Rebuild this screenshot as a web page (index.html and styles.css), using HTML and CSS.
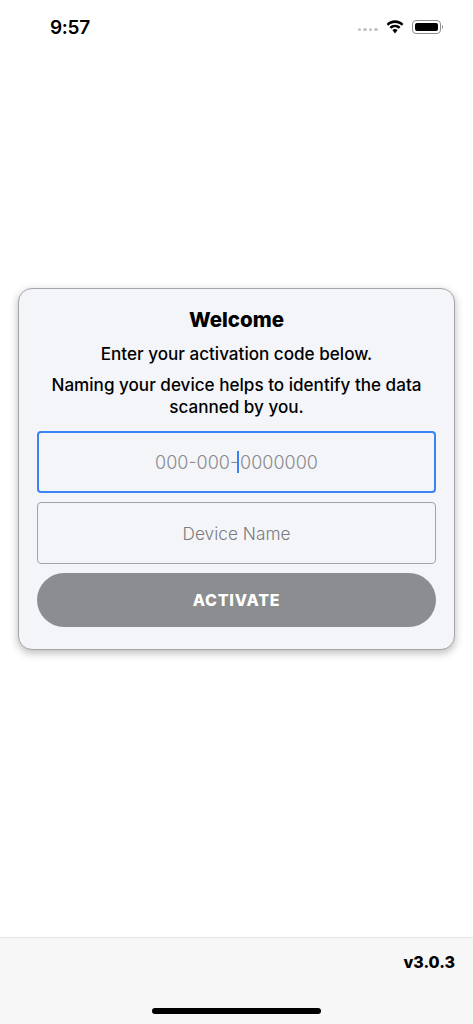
FILE: index.html
```html
<!DOCTYPE html>
<html lang="en">
<head>
    <meta charset="UTF-8">
    <meta name="viewport" content="width=device-width, initial-scale=1.0">
    <title>Activate</title>
    <link rel="stylesheet" href="styles.css">
</head>
<body>
    <div class="status-bar">
        <span class="time">9:57</span>
        <div class="status-icons">
            <div class="signal"><i></i><i></i><i></i><i></i></div>
            <svg class="wifi" width="20" height="14" viewBox="0.4 0 17.2 14">
                <path d="M9 3c2.600 0 5 1 6.700 2.700l1.700-1.800C15.200 1.700 12.200.3 9 .3S2.800 1.700.6 3.900l1.700 1.800C4 4 6.400 3 9 3z" fill="#000"/>
                <path d="M9 7.200c1.500 0 2.800.6 3.800 1.500l1.700-1.800C13 5.500 11.100 4.700 9 4.700s-4 .8-5.500 2.200l1.700 1.800C6.200 7.800 7.500 7.200 9 7.200z" fill="#000"/>
                <path d="M9 9c-1 0-1.900.4-2.600 1L9 13.600l2.600-3.600c-.7-.6-1.600-1-2.600-1z" fill="#000"/>
            </svg>
            <div class="battery"><div class="battery-fill"></div></div>
            <div class="battery-cap"></div>
        </div>
    </div>

    <main class="main">
        <div class="card">
            <h1>Welcome</h1>
            <p class="intro">Enter your activation code below.</p>
            <p class="hint">Naming your device helps to identify the data scanned by you.</p>
            <div class="field focused">000-000-<span class="caret"></span>0000000</div>
            <div class="field">Device Name</div>
            <button type="button" class="activate">ACTIVATE</button>
        </div>
    </main>

    <footer class="footer">
        <span class="version">v3.0.3</span>
        <div class="home-bar"></div>
    </footer>
</body>
</html>
```

FILE: styles.css
```css
html, body {
    margin: 0;
    height: 100%;
}

body {
    display: flex;
    flex-direction: column;
    height: 1024px;
    overflow: hidden;
    background-color: #fff;
    color: #000;
    font-family: Inter, "Noto Sans", sans-serif;
}

.status-bar {
    display: flex;
    justify-content: space-between;
    align-items: center;
    height: 54px;
    padding: 0 30px 0 50px;
    box-sizing: border-box;
}

.time {
    font-size: 19px;
    font-weight: 600;
    letter-spacing: -0.3px;
}

.status-icons {
    display: flex;
    align-items: center;
}

.signal {
    display: flex;
    gap: 2px;
    margin: 5px 7px 0 0;
}

.signal i {
    width: 3.5px;
    height: 3.5px;
    border-radius: 50%;
    background-color: #c4c4c4;
}

.wifi {
    margin-right: 7px;
}

.battery {
    width: 29px;
    height: 14px;
    padding: 2px;
    box-sizing: border-box;
    border: 1px solid #8e8e8e;
    border-radius: 4px;
}

.battery-fill {
    height: 100%;
    background-color: #000;
    border-radius: 2px;
}

.battery-cap {
    width: 1.5px;
    height: 4px;
    margin-left: 1px;
    background-color: #9a9a9a;
    border-radius: 0 1px 1px 0;
}

.main {
    flex: 1;
    padding: 234px 18px 0;
}

.card {
    display: flex;
    flex-direction: column;
    height: 362px;
    padding: 18px;
    box-sizing: border-box;
    background-color: #f4f5f9;
    border: 1px solid #a6a6a8;
    border-radius: 14px;
    box-shadow: 0 3px 9px rgba(0, 0, 0, 0.28);
    text-align: center;
}

h1 {
    margin: 0;
    font-size: 20.5px;
    line-height: 26px;
    font-weight: 800;
}

.intro, .hint {
    margin: 0;
    font-size: 17.1px;
    line-height: 22px;
    font-weight: 500;
}

.intro {
    margin-top: 10px;
}

.hint {
    margin: 9px 0 13px;
}

.field {
    display: flex;
    justify-content: center;
    align-items: center;
    height: 62px;
    margin-bottom: 9px;
    box-sizing: border-box;
    border: 1px solid #a3a3a6;
    border-radius: 4px;
    color: #7b7b7e;
    font-size: 17.3px;
    font-weight: 300;
}

.field.focused {
    border: 2px solid #3b82f6;
    color: #8a8a8d;
    font-size: 18px;
}

.caret {
    width: 2px;
    height: 22px;
    margin: 0 1px 0 -1px;
    background-color: #3b82f6;
}

.activate {
    height: 54px;
    padding: 0;
    border: none;
    border-radius: 27px;
    background-color: #8c8d90;
    color: #fff;
    font-family: Inter, sans-serif;
    font-size: 16px;
    font-weight: 800;
    letter-spacing: 0.8px;
}

.footer {
    display: flex;
    flex-direction: column;
    align-items: center;
    height: 87px;
    box-sizing: border-box;
    background-color: #f7f7f7;
    border-top: 1px solid #e4e4e4;
}

.version {
    align-self: flex-end;
    margin: 14px 18px 0 0;
    font-size: 16px;
    line-height: 20px;
    font-weight: 800;
}

.home-bar {
    width: 169px;
    height: 6px;
    margin-top: 36px;
    background-color: #000;
    border-radius: 3px;
}
```
